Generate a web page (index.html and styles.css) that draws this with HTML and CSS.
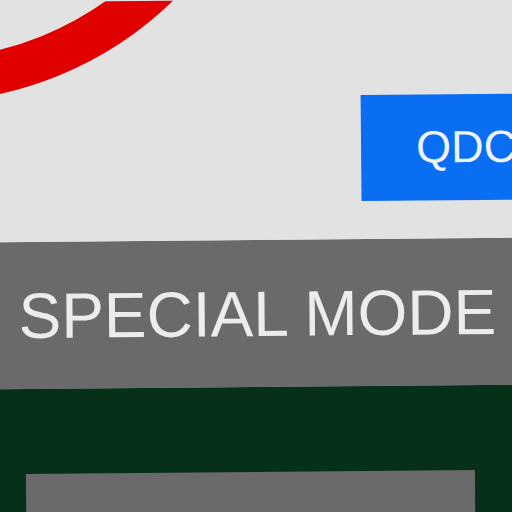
FILE: index.html
```html
<!DOCTYPE html>
<html>
<head>
<meta charset="utf-8">
<link rel="stylesheet" href="styles.css">
</head>
<body>
<div class="stage">
  <section class="top">
    <svg class="arc" width="512" height="240" viewBox="0 0 512 240" aria-hidden="true">
      <circle cx="-73" cy="-260" r="338" fill="none" stroke="#e00000" stroke-width="43"/>
    </svg>
    <div class="btn">QDC</div>
  </section>
  <section class="band">
    <span class="title">SPECIAL MODE</span>
  </section>
  <section class="panel">
    <div class="inner"></div>
  </section>
</div>
</body>
</html>
```
FILE: styles.css
```css
html, body {
  margin: 0;
  padding: 0;
  width: 512px;
  height: 512px;
  overflow: hidden;
  background: #e2e2e2;
}
.stage {
  width: 512px;
  margin: 0;
  transform: rotate(-0.5deg);
  transform-origin: 256px 256px;
  font-family: "Liberation Sans", Arial, sans-serif;
}
.top {
  position: relative;
  height: 240px;
  background: #e2e2e2;
  box-shadow: 0 -40px 0 0 #e2e2e2;
  display: flex;
  justify-content: flex-end;
  align-items: flex-start;
  padding-top: 96px;
  box-sizing: border-box;
}
.arc {
  position: absolute;
  left: 0;
  top: 0;
}
.btn {
  width: 190px;
  margin-right: -40px;
  height: 106px;
  background: #0a6ef3;
  color: #eef3fb;
  font-size: 45px;
  display: flex;
  align-items: center;
  padding-left: 55px;
  box-sizing: border-box;
}
.band {
  height: 147px;
  background: #6a6a6a;
  display: flex;
  align-items: center;
  margin-right: -20px;
  margin-left: -20px;
  padding-left: 38px;
}
.title {
  color: #ececec;
  font-size: 64px;
  white-space: nowrap;
  margin-top: 0;
}
.panel {
  background: #063017;
  height: 160px;
  margin-left: -20px;
  margin-right: -20px;
  padding: 85px 59px 0 44px;
  box-sizing: border-box;
}
.inner {
  height: 100px;
  background: #6a6a6a;
}
```
